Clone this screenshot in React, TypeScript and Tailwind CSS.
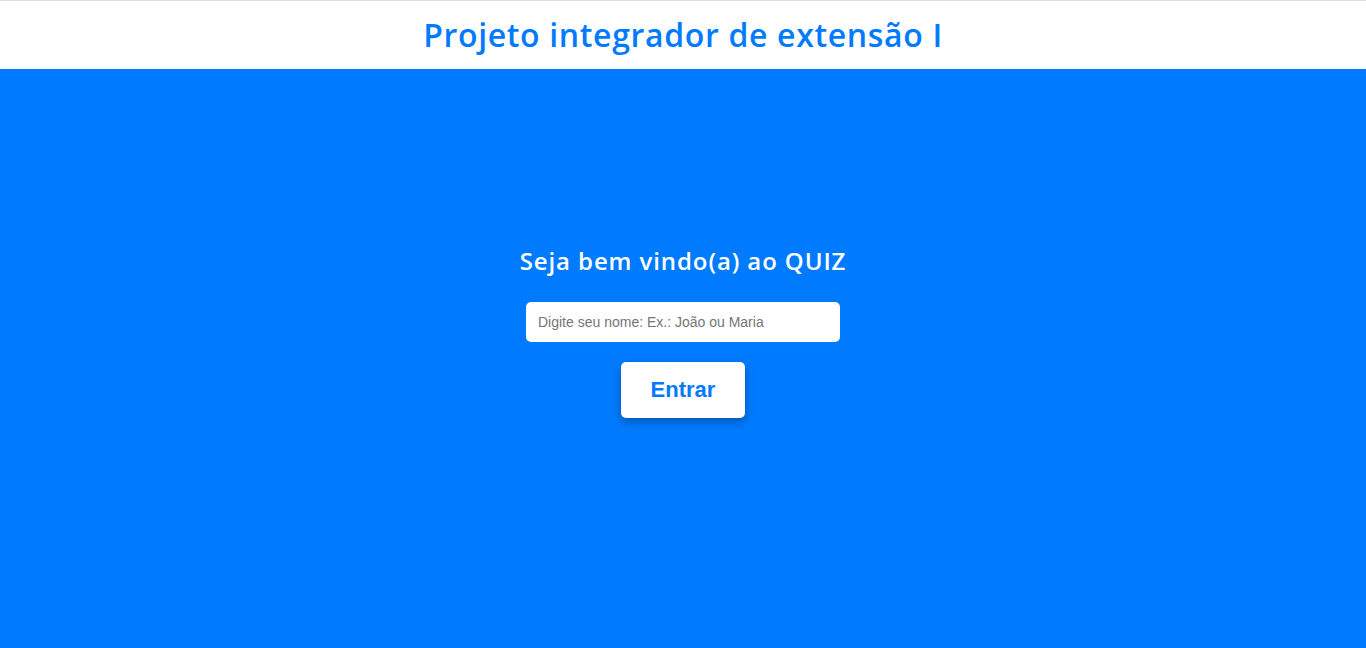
export default function App() {
  return (
    <div className="min-h-screen flex flex-col bg-[#007bff]">
      {/* Header */}
      <header className="h-[69px] bg-white border-t border-[#dddddd] flex items-center justify-center">
        <h1 className="text-[32px] font-semibold text-[#007bff] font-['Open_Sans',sans-serif] leading-none tracking-[0.65px]">
          Projeto integrador de extensão I
        </h1>
      </header>

      {/* Quiz */}
      <main className="flex-1 flex flex-col items-center pt-[176px] pb-10">
        <h2 className="text-[24px] leading-8 font-semibold text-white font-['Open_Sans',sans-serif] tracking-[0.9px]">
          Seja bem vindo(a) ao QUIZ
        </h2>
        <input
          type="text"
          placeholder="Digite seu nome: Ex.: João ou Maria"
          className="mt-[25px] w-[314px] h-10 rounded-[5px] bg-white px-3 text-sm text-gray-800 placeholder:text-[#757575] outline-none font-['Liberation_Sans',Arial,sans-serif]"
        />
        <button className="mt-5 w-[124px] h-14 rounded-[5px] bg-white text-[22px] font-bold text-[#007bff] pb-0.5 shadow-[0_4px_10px_rgba(0,0,0,0.3)] font-['Liberation_Sans',Arial,sans-serif]">
          Entrar
        </button>
      </main>
    </div>
  );
}
